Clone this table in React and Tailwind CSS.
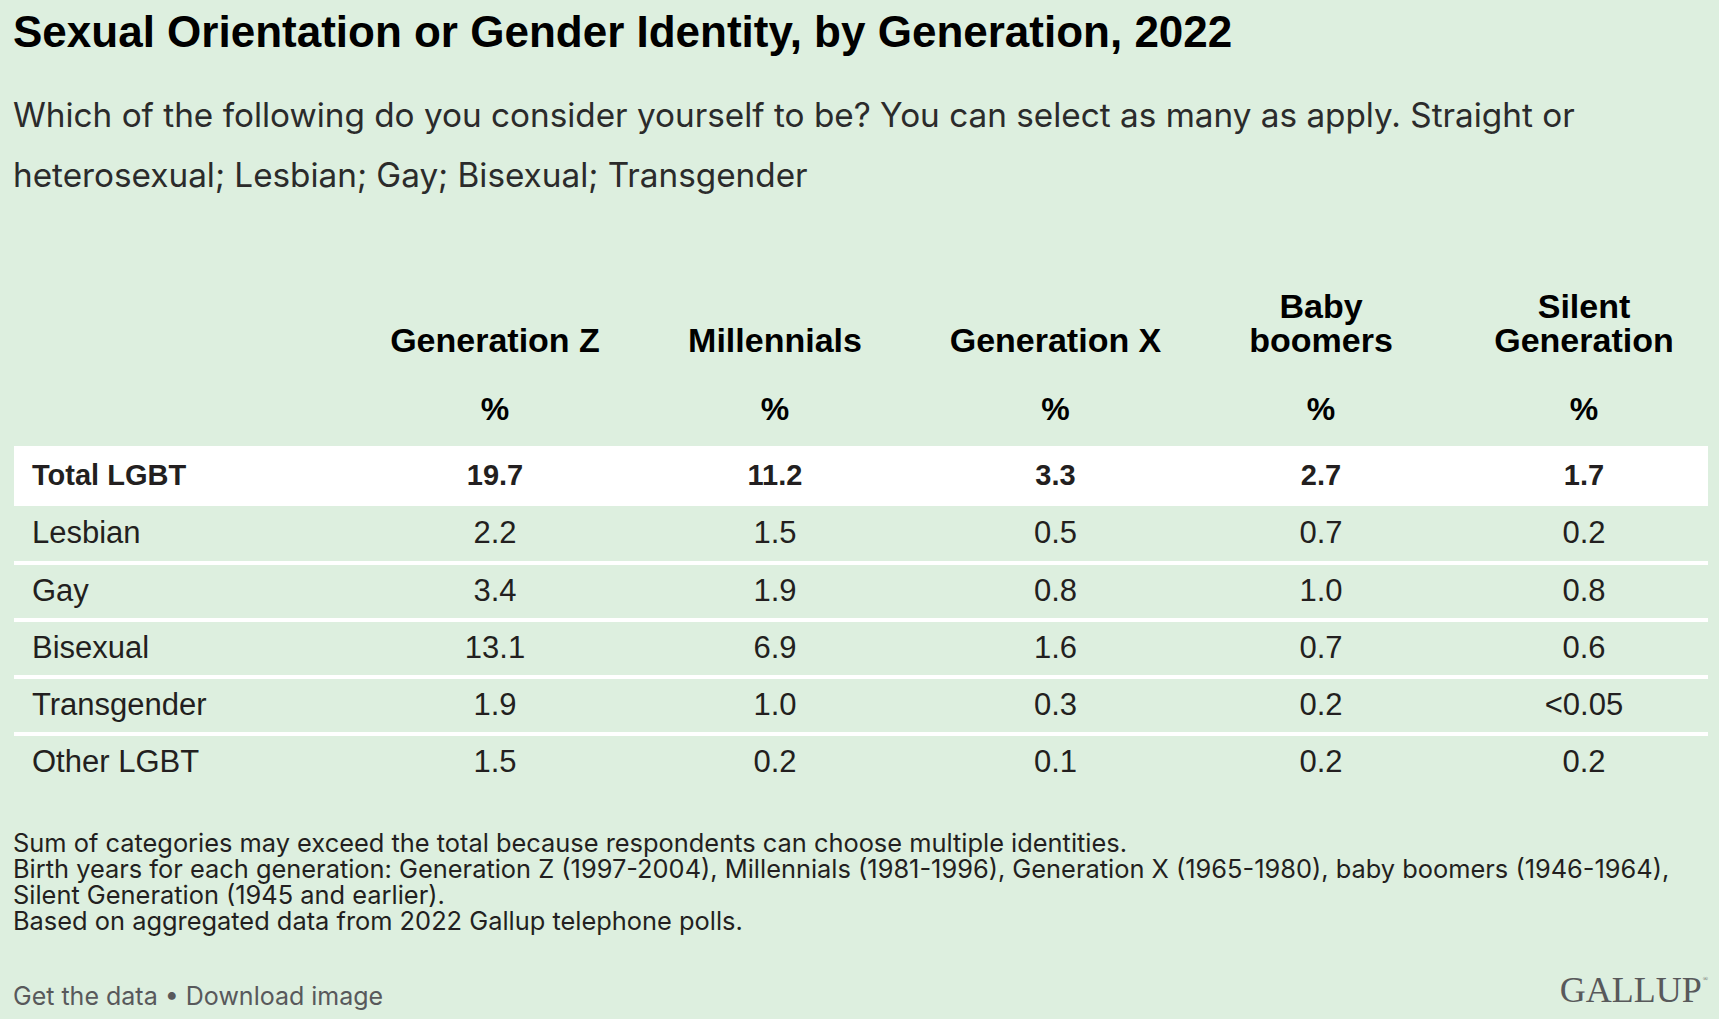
import React from "react";

const cols = ["Generation Z", "Millennials", "Generation X", "Baby boomers", "Silent Generation"];

const rows = [
  { label: "Lesbian", values: ["2.2", "1.5", "0.5", "0.7", "0.2"] },
  { label: "Gay", values: ["3.4", "1.9", "0.8", "1.0", "0.8"] },
  { label: "Bisexual", values: ["13.1", "6.9", "1.6", "0.7", "0.6"] },
  { label: "Transgender", values: ["1.9", "1.0", "0.3", "0.2", "<0.05"] },
  { label: "Other LGBT", values: ["1.5", "0.2", "0.1", "0.2", "0.2"] },
];

const grid = "grid grid-cols-[341px_280px_280px_281px_250px_262px]";

const App = () => {
  return (
    <div
      className="w-[1719px] h-[1019px] bg-[#ddefdf] pl-[13px] pr-[11px] overflow-hidden text-[#231f20]"
      style={{ fontFamily: '"Liberation Sans", Arial, sans-serif' }}
    >
      <h1 className="pt-[10px] text-[44px] leading-[43px] font-bold text-black">
        Sexual Orientation or Gender Identity, by Generation, 2022
      </h1>
      <p
        className="mt-[32px] w-[1600px] text-[33.3px] leading-[60px] text-[#2b2b2b]"
        style={{ fontFamily: "Inter, 'Liberation Sans', sans-serif" }}
      >
        Which of the following do you consider yourself to be? You can select as many as apply. Straight or
        heterosexual; Lesbian; Gay; Bisexual; Transgender
      </p>

      <div className="mt-[84px] ml-[1px]">
        <div className={`${grid} items-end text-[34px] leading-[34px] font-bold text-black`}>
          <div />
          <div className="text-center">Generation Z</div>
          <div className="text-center">Millennials</div>
          <div className="text-center">Generation X</div>
          <div className="text-center">Baby<br />boomers</div>
          <div className="text-center pl-[14px]">Silent<br />Generation</div>
        </div>
        <div className={`${grid} mt-[36px] text-[32px] leading-[32px] font-bold text-black`}>
          <div />
          {cols.map((c, i) => (
            <div key={c} className={`text-center ${i === 4 ? "pl-[14px]" : ""}`}>%</div>
          ))}
        </div>

        <div className={`${grid} mt-[21px] h-[60px] items-center bg-white text-[29px] font-bold text-[#231f20]`}>
          <div className="pl-[18px]">Total LGBT</div>
          {["19.7", "11.2", "3.3", "2.7", "1.7"].map((v, i) => (
            <div key={i} className={`text-center ${i === 4 ? "pl-[14px]" : ""}`}>{v}</div>
          ))}
        </div>

        {rows.map((r, ri) => (
          <div
            key={r.label}
            className={`${grid} items-center text-[31px] ${ri === 0 ? "h-[55px]" : "h-[57px] border-t-4 border-white"}`}
          >
            <div className="pl-[18px]">{r.label}</div>
            {r.values.map((v, i) => (
              <div key={i} className={`text-center ${i === 4 ? "pl-[14px]" : ""}`}>{v}</div>
            ))}
          </div>
        ))}
      </div>

      <div
        className="mt-[41px] text-[25.4px] leading-[26px] text-[#231f20]"
        style={{ fontFamily: "Inter, 'Liberation Sans', sans-serif" }}
      >
        <p>Sum of categories may exceed the total because respondents can choose multiple identities.</p>
        <p>
          Birth years for each generation: Generation Z (1997-2004), Millennials (1981-1996), Generation X (1965-1980), baby boomers (1946-1964),
          <br />
          Silent Generation (1945 and earlier).
        </p>
        <p>Based on aggregated data from 2022 Gallup telephone polls.</p>
      </div>

      <div className="mt-[38px] flex items-end justify-between">
        <div
          className="text-[25px] leading-[30px] text-[#58595b]"
          style={{ fontFamily: "Inter, 'Liberation Sans', sans-serif" }}
        >
          Get the data • Download image
        </div>
        <div
          className="flex items-start mb-[3px] text-[36px] leading-[36px] text-[#58595b]"
          style={{ fontFamily: '"Liberation Serif", "Times New Roman", serif' }}
        >
          GALLUP
          <span className="ml-[1px] mt-[4px] text-[7px] leading-none">®</span>
        </div>
      </div>
    </div>
  );
};

export default App;
